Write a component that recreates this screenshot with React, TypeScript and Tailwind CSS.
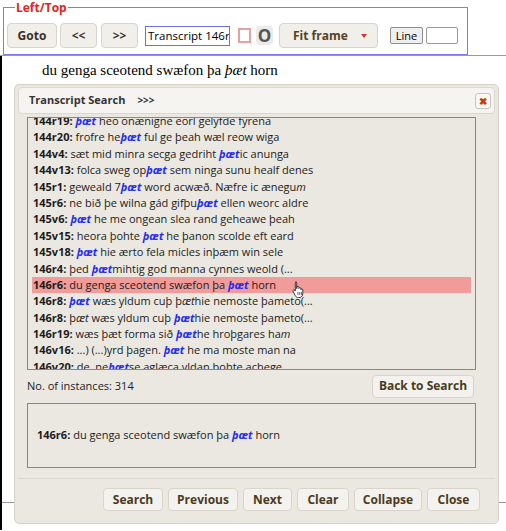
import type { ReactNode } from "react";

type Row = { id: string; text: ReactNode; active?: boolean };

// blue highlighted search hit
function Hit() {
  return <span className="font-bold italic text-[#1f2bf5]">þæt</span>;
}

const rows: Row[] = [
  { id: "144r19", text: <><Hit /> heo onænigne eorl gelyfde fyrena</> },
  { id: "144r20", text: <>frofre he<Hit /> ful ge þeah wæl reow wiga</> },
  { id: "144v4", text: <>sæt mid minra secga gedriht <Hit />ic anunga</> },
  { id: "144v13", text: <>folca sweg op<Hit /> sem ninga sunu healf denes</> },
  { id: "145r1", text: <>geweald 7<Hit /> word acwæð. Næfre ic ænegu<i>m</i></> },
  { id: "145r6", text: <>ne bið þe wilna gád gifþu<Hit /> ellen weorc aldre</> },
  { id: "145v6", text: <><Hit /> he me ongean slea rand geheawe þeah</> },
  { id: "145v15", text: <>heora þohte <Hit /> he þanon scolde eft eard</> },
  { id: "145v18", text: <><Hit /> hie ærto fela micles inþæm win sele</> },
  { id: "146r4", text: <>þed <Hit />mihtig god manna cynnes weold (...</> },
  { id: "146r6", text: <>du genga sceotend swæfon þa <Hit /> horn</>, active: true },
  { id: "146r8", text: <><Hit /> wæs yldum cuþ þ<i>æt</i>hie nemoste þameto(...</> },
  { id: "146r8", text: <>þ<i>æt</i> wæs yldum cuþ <Hit />hie nemoste þameto(...</> },
  { id: "146r19", text: <>wæs þæt forma sið <Hit />he hroþgares ha<i>m</i></> },
  { id: "146v16", text: <>...) (...)yrd þagen. <Hit /> he ma moste man na</> },
  { id: "146v20", text: <>de. ne<Hit />se aglæca yldan þohte achege</> },
];

function TopButton({ children, className = "" }: { children: ReactNode; className?: string }) {
  return (
    <button
      className={`h-[25px] rounded-[4px] border border-[#d8d4cb] bg-[#f1efea] text-[12px] font-bold text-[#3b3020] ${className}`}
    >
      {children}
    </button>
  );
}

function DlgButton({ children, w }: { children: ReactNode; w: string }) {
  return (
    <button
      className={`h-[23px] ${w} rounded-[4px] border border-[#d9d5ca] bg-[#f4f2ee] text-[12px] font-bold text-[#4a3b22]`}
    >
      {children}
    </button>
  );
}

function HandCursor() {
  return (
    <svg width="12" height="17" viewBox="0 0 12 17" className="absolute left-[292px] top-[281px]">
      <path
        d="M3.5 1.2c.7 0 1.2.5 1.2 1.2v5.2l.2-.1V6.3c0-.6.5-1 1-1s1 .4 1 1v1.2c.1-.5.5-.9 1-.9s1 .4 1 1v1c.1-.4.5-.7.9-.7.6 0 1 .4 1 1v3.6c0 2.3-1.5 4.1-3.8 4.1H6.3c-1.3 0-2.3-.7-3-1.8L1.2 10.6c-.4-.6-.2-1.3.3-1.6.5-.3 1.1-.1 1.4.4l.4.6V2.4c0-.7.5-1.2 1.2-1.2z"
        fill="#fff"
        stroke="#222"
        strokeWidth="0.9"
      />
      <path d="M5.9 11v3M7.8 11v3M9.6 11v3" stroke="#222" strokeWidth="0.7" />
    </svg>
  );
}

export default function App() {
  return (
    <div className="relative h-[531px] w-[506px] overflow-hidden bg-white font-['Open_Sans',sans-serif]">
      <div className="pl-[3px]">
        <fieldset className="w-[465px] border border-[#7c7cf2] pl-[3px] pb-[6px] pt-[8px]">
          <legend className="ml-[8px] px-[1px] text-[12px] font-bold leading-[15px] text-[#e0261f]">
            Left/Top
          </legend>
          <div className="flex items-center">
            <TopButton className="w-[50px]">Goto</TopButton>
            <TopButton className="ml-[3px] w-[37px]">&lt;&lt;</TopButton>
            <TopButton className="ml-[4px] w-[37px]">&gt;&gt;</TopButton>
            <div className="ml-[7px] flex h-[20px] w-[85px] items-center overflow-hidden whitespace-nowrap border border-[#6f6fee] pl-[2px] text-[11.5px] text-black">
              Transcript 146r
            </div>
            <div className="ml-[8px] h-[15px] w-[13px] border-2 border-[#e6a1a1] bg-white" />
            <div className="ml-[5px] flex h-[19px] w-[17px] items-center justify-center rounded-[4px] bg-[#ebebeb] text-[17px] font-bold leading-none text-[#555]">
              O
            </div>
            <TopButton className="ml-[6px] flex w-[99px] items-center pl-[13px] pr-[10px]">
              <span className="text-[#5a4220]">Fit frame</span>
              <span className="ml-auto h-0 w-0 border-x-[3px] border-t-[4px] border-x-transparent border-t-[#d23a2a]" />
            </TopButton>
            <button className="ml-[12px] h-[17px] w-[33px] rounded-[2px] border border-[#8d8d8d] bg-[#efefef] text-[11px] leading-none text-black">
              Line
            </button>
            <div className="ml-[3px] h-[17px] w-[32px] rounded-[2px] border border-[#999]" />
          </div>
        </fieldset>
      </div>
      <div className="h-[1px] bg-[#9b9b9b]" />
      <div className="h-[474px] border-l-2 border-black">
        <p className="pl-[40px] pt-[4px] font-['Liberation_Serif',serif] text-[15px] leading-[20px] text-black">
          du genga sceotend swæfon þa <i>þæt</i> horn
        </p>
        <div className="mt-[422px] h-px bg-[#9a9a9a]" />
      </div>

      {/* search dialog */}
      <div className="absolute left-[14px] top-[84px] h-[440px] w-[485px] rounded-[5px] border border-[#d6d2c7] bg-[#ebe8e1] px-[3px] pt-[2px]">
        <div className="flex h-[27px] items-center rounded-[4px] border border-[#dcd8cf] bg-[#f5f4f1] pl-[10px] pr-[3px] text-[11px] font-bold text-[#333]">
          <span>Transcript Search</span>
          <span className="ml-[12px] text-[10px]">&gt;&gt;&gt;</span>
          <span className="ml-auto flex h-[16px] w-[16px] items-center justify-center rounded-[3px] border border-[#c9c5bb] bg-[#f8f7f4] text-[10px] leading-none text-[#c0391b]">
            ✖
          </span>
        </div>

        <div className="ml-[9px] mt-[3px] h-[253px] w-[449px] overflow-hidden border border-[#7a7af0]">
          <div className="-mt-[5px] px-[4px] text-[11px] leading-[16.4px] text-[#1b1b1b]">
            {rows.map((r, i) => (
              <div
                key={i}
                className={`h-[16.4px] whitespace-nowrap pl-[1px] ${r.active ? "bg-[#f19c9a]" : ""}`}
              >
                <span className="font-bold">{r.id}:</span> {r.text}
              </div>
            ))}
          </div>
        </div>

        <div className="ml-[9px] mt-[5px] flex h-[22px] w-[447px] items-center justify-between">
          <span className="text-[11px] text-[#222]">No. of instances: 314</span>
          <DlgButton w="w-[102px]">Back to Search</DlgButton>
        </div>

        <div className="ml-[9px] mt-[6px] flex h-[65px] w-[449px] items-center border border-[#7a7af0] pl-[9px] text-[11px] text-[#1b1b1b]">
          <span className="font-bold">146r6:</span>&nbsp;du genga sceotend swæfon þa&nbsp;<Hit />&nbsp;horn
        </div>

        <div className="mt-[10px] h-px bg-[#dcd8cf]" />

        <div className="mt-[9px] flex justify-end gap-[5px] pr-[15px]">
          <DlgButton w="w-[60px]">Search</DlgButton>
          <DlgButton w="w-[70px]">Previous</DlgButton>
          <DlgButton w="w-[49px]">Next</DlgButton>
          <DlgButton w="w-[52px]">Clear</DlgButton>
          <DlgButton w="w-[68px]">Collapse</DlgButton>
          <DlgButton w="w-[53px]">Close</DlgButton>
        </div>
      </div>

      <HandCursor />
    </div>
  );
}
